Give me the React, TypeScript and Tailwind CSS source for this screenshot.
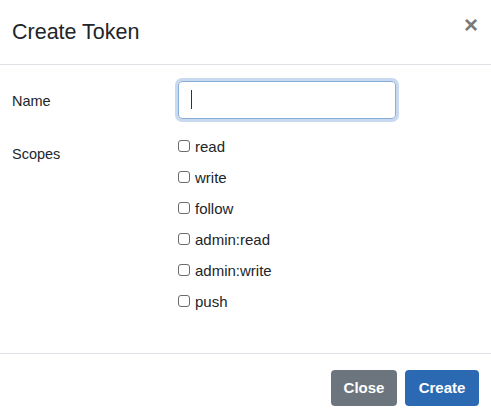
import { useState } from 'react';

const scopes = ['read', 'write', 'follow', 'admin:read', 'admin:write', 'push'];

export default function App() {
  const [name, setName] = useState('');
  const [checked, setChecked] = useState<Record<string, boolean>>({});

  return (
    <div className="w-[491px] h-[419px] bg-white text-[#212529] overflow-hidden font-['Liberation_Sans',Arial,sans-serif]">
      {/* header */}
      <div className="h-[65px] border-b border-[#dee2e6] flex items-center justify-between pl-[12px] pr-[13px]">
        <h5 className="text-[21.5px] leading-none pt-[1px]">Create Token</h5>
        <button className="text-[24px] font-bold leading-none text-[#7a7a7a] -mt-[14px]">×</button>
      </div>

      {/* body */}
      <div className="h-[288px] pt-[16px] pl-[12px]">
        <div className="flex items-center">
          <label className="w-[166px] text-[14.5px] pt-[3px]">Name</label>
          <div className="relative">
            <input
              value={name}
              onChange={(e) => setName(e.target.value)}
              className="w-[218px] h-[38px] rounded-[4px] border border-[#8aaedb] ring-[3px] ring-[#c9d9ef] outline-none px-3 text-[15px]"
            />
            {name === '' && <span className="absolute left-[13px] top-[9px] w-px h-[19px] bg-[#333]" />}
          </div>
        </div>

        <div className="flex mt-[16px]">
          <label className="w-[166px] text-[14.5px] pt-[9px]">Scopes</label>
          <div className="pt-[1px]">
            {scopes.map((s) => (
              <label key={s} className="flex items-center h-[21px] mb-[10px] text-[15px] leading-[21px]">
                <input
                  type="checkbox"
                  checked={!!checked[s]}
                  onChange={() => setChecked({ ...checked, [s]: !checked[s] })}
                  className="appearance-none w-[12px] h-[12px] rounded-[3px] border border-[#6b6b6b] bg-white mr-[5px] -mt-[2px]"
                />
                {s}
              </label>
            ))}
          </div>
        </div>
      </div>

      {/* footer */}
      <div className="border-t border-[#dee2e6] flex justify-end gap-[8px] pt-[16px] pr-[12px]">
        <button className="w-[66px] h-[36px] rounded-[4px] bg-[#6c757d] text-white font-bold text-[15px]">Close</button>
        <button className="w-[74px] h-[36px] rounded-[4px] bg-[#2c69b3] text-white font-bold text-[15px]">Create</button>
      </div>
    </div>
  );
}
